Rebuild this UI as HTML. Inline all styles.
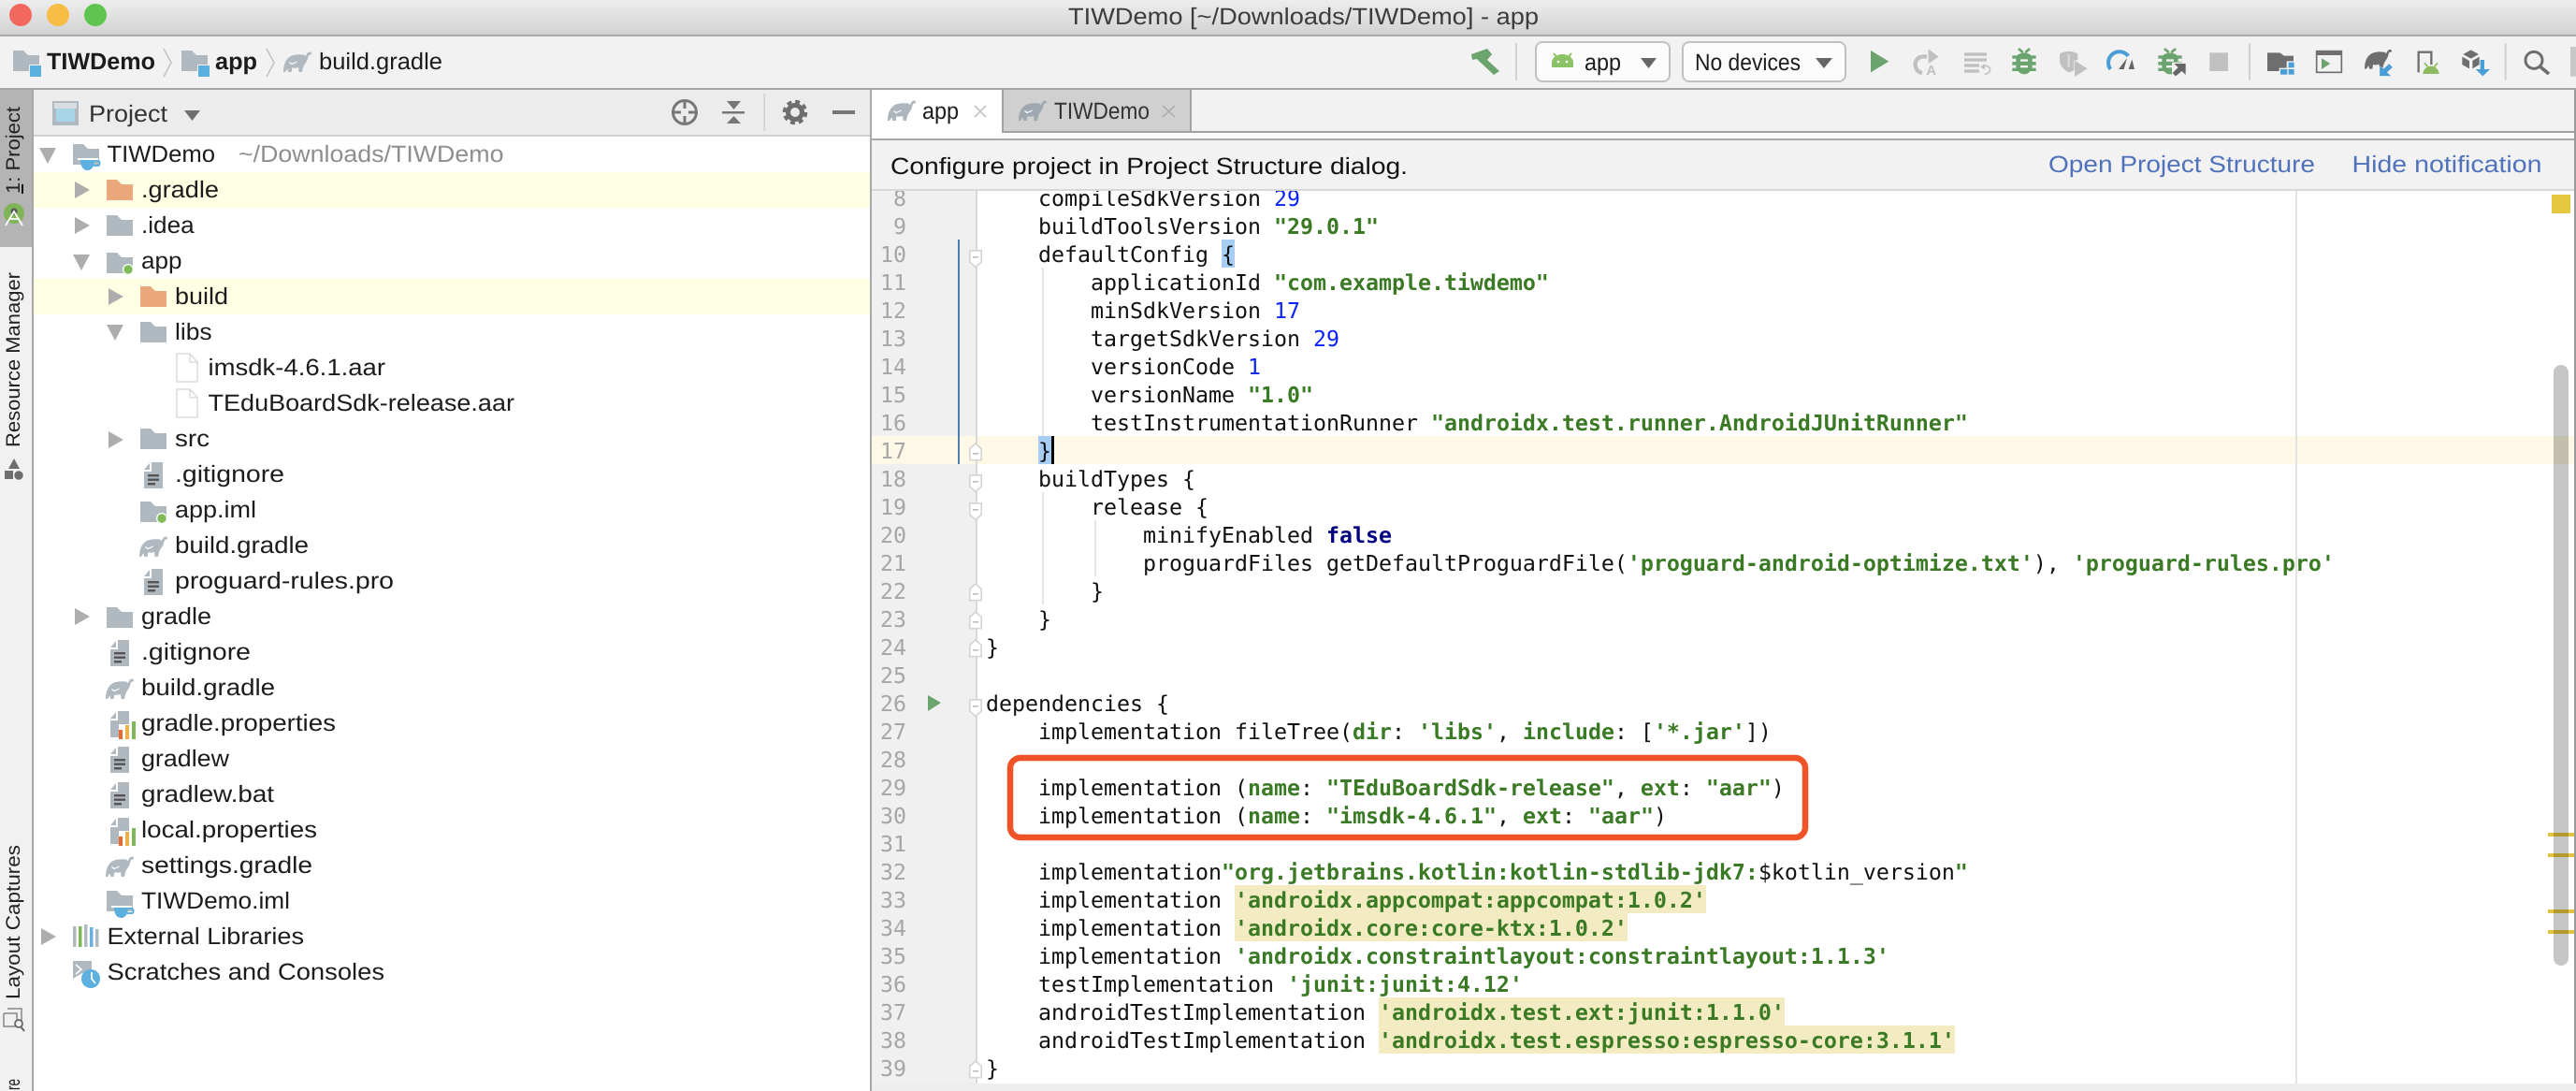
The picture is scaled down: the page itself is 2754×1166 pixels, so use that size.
<!DOCTYPE html>
<html><head><meta charset="utf-8"><title>TIWDemo</title>
<style>
html,body{margin:0;padding:0;background:#fff;width:2754px;height:1166px;overflow:hidden}
svg{display:block;text-rendering:geometricPrecision;filter:blur(.35px)}
text{white-space:pre}
.t{font-family:"Liberation Sans",sans-serif;font-size:25px;fill:#1c1c1c}
.b{font-weight:bold}
.v{font-family:"Liberation Sans",sans-serif;font-size:21px;fill:#222}
.c{font-family:"DejaVu Sans Mono","Liberation Mono",monospace;font-size:23.254px;fill:#111}
.c .s{font-weight:bold;fill:#3b7a24}
.c .n{fill:#0b24f5}
.c .k{font-weight:bold;fill:#000080}
.l{font-family:"DejaVu Sans Mono","Liberation Mono",monospace;font-size:23.254px;fill:#a6a6a6;text-anchor:end}
</style></head><body>
<svg width="2754" height="1166" viewBox="0 0 2754 1166" xmlns="http://www.w3.org/2000/svg">
<defs>
<linearGradient id="tb" x1="0" y1="0" x2="0" y2="1"><stop offset="0" stop-color="#ededed"/><stop offset="1" stop-color="#d2d2d2"/></linearGradient>
<symbol id="fold" viewBox="0 0 28 22" width="28" height="22" overflow="visible"><path d="M0 0H11L16 5H28V22H0Z"/></symbol>
<symbol id="ele" viewBox="0 0 30 23" width="30" height="23" overflow="visible"><path d="M0 22C0 13 3 7 9 4.500C13 3 18 3 22 3.500C23 4 23.500 5 24 5C24.500 3 26 .5 28.500 .5C30 .5 30.200 2.500 29.700 3.500C28.500 3 27 3.500 26.500 5.500C26 9 24 12 22.500 14C21 16.500 20.500 19 20 22H16.700L16 17C13.500 17.800 11.500 17.800 9.300 17.300L8.700 22H5.300L4.300 18.300L2 22Z"/><path d="M6.500 11.500l2.500 2l5.500-2.500" fill="none" stroke="#fff" stroke-width="1.200"/></symbol>
<symbol id="page" viewBox="0 0 20 28" width="20" height="28" overflow="visible"><path d="M8 0H20V28H0V10H8Z" fill="#b0b8c0"/><path d="M6 1V8H0Z" fill="#b0b8c0"/></symbol>
<symbol id="doc" viewBox="0 0 20 28" width="20" height="28" overflow="visible"><use href="#page"/><rect x="4" y="13" width="12" height="2.4" fill="#555"/><rect x="4" y="17.5" width="12" height="2.4" fill="#555"/><rect x="4" y="22" width="8" height="2.4" fill="#555"/></symbol>
<symbol id="prop" viewBox="0 0 28 30" width="28" height="30" overflow="visible"><use href="#page"/><rect x="9" y="14" width="18" height="16" fill="#fff"/><rect x="9" y="20" width="4" height="10" fill="#e8692d"/><rect x="16" y="15" width="4" height="15" fill="#eeb04a"/><rect x="23" y="11" width="4" height="19" fill="#7fb85a"/></symbol>
<symbol id="aar" viewBox="0 0 24 32" width="24" height="32" overflow="visible"><path d="M1 1H15L23 10V31H1Z" fill="#fff" stroke="#dcdcdc" stroke-width="1.6"/><path d="M15 1V10H23" fill="none" stroke="#dcdcdc" stroke-width="1.4"/></symbol>
<symbol id="cup" viewBox="0 0 22 12" width="22" height="12" overflow="visible"><path d="M-3-2H19V0H-3Z" fill="#fff"/><path d="M0 0H15C15 7 12 11 7.500 11C3 11 0 7 0 0Z" fill="#5cb0e0"/><path d="M15 1H19C21 1 21 6 19 6H14" fill="none" stroke="#5cb0e0" stroke-width="2"/></symbol>
<symbol id="fdown" viewBox="0 0 14 20" width="14" height="20" overflow="visible"><path d="M.8 .8H13.200V13L7 18.500L.8 13Z" fill="#fff" stroke="#d4d4d4" stroke-width="1.600"/><rect x="4" y="7" width="6" height="1.600" fill="#bdbdbd"/></symbol>
<symbol id="fup" viewBox="0 0 14 20" width="14" height="20" overflow="visible"><path d="M.8 18.700H13.200V6.500L7 1L.8 6.500Z" fill="#fff" stroke="#d4d4d4" stroke-width="1.600"/><rect x="4" y="11" width="6" height="1.600" fill="#bdbdbd"/></symbol>
<symbol id="bug" viewBox="0 0 80 90" width="80" height="90" overflow="visible"><path d="M22 2L36 14M58 2L44 14" stroke="#6ba46e" stroke-width="8" fill="none"/><path d="M14 26Q40 4 66 26V60Q58 84 40 84Q22 84 14 60Z" fill="#6ba46e"/><rect x="2" y="24" width="76" height="10" fill="#6ba46e"/><rect x="2" y="44" width="76" height="11" fill="#6ba46e"/><rect x="2" y="64" width="76" height="10" fill="#6ba46e"/><rect x="28" y="36" width="24" height="7" fill="#f2f2f2"/><rect x="28" y="56" width="24" height="7" fill="#f2f2f2"/></symbol>
</defs>

<rect width="2754" height="1166" fill="#fff"/>

<!-- EDITOR -->
<rect x="932" y="204" width="111" height="954" fill="#f0f0f0"/>
<rect x="932" y="466" width="1820" height="30" fill="#fef9e6"/>
<rect x="1043" y="204" width="2" height="954" fill="#d8d8d8"/>
<rect x="2454" y="204" width="2" height="954" fill="#e2e2e2"/>
<rect x="1024" y="256" width="2" height="240" fill="#4f7db0"/>
<rect x="1320" y="946" width="504" height="30" fill="#f3ecc3"/>
<rect x="1320" y="976" width="420" height="30" fill="#f3ecc3"/>
<rect x="1474" y="1066" width="434" height="30" fill="#f3ecc3"/>
<rect x="1474" y="1096" width="616" height="30" fill="#f3ecc3"/>
<rect x="1306" y="256" width="14" height="30" fill="#a8cdf5"/>
<rect x="1110" y="466" width="14" height="30" fill="#a8cdf5"/>
<rect x="1124" y="466" width="3" height="30" fill="#000"/>
<rect x="1114" y="286" width="2" height="180" fill="#e4e4e4"/>
<rect x="1114" y="526" width="2" height="120" fill="#e4e4e4"/>
<rect x="1170" y="556" width="2" height="60" fill="#e4e4e4"/>
<g class="l">
<text class="l" x="969" y="220">8</text><text class="l" x="969" y="250">9</text><text class="l" x="969" y="280">10</text><text class="l" x="969" y="310">11</text><text class="l" x="969" y="340">12</text><text class="l" x="969" y="370">13</text><text class="l" x="969" y="400">14</text><text class="l" x="969" y="430">15</text><text class="l" x="969" y="460">16</text><text class="l" x="969" y="490">17</text><text class="l" x="969" y="520">18</text><text class="l" x="969" y="550">19</text><text class="l" x="969" y="580">20</text><text class="l" x="969" y="610">21</text><text class="l" x="969" y="640">22</text><text class="l" x="969" y="670">23</text><text class="l" x="969" y="700">24</text><text class="l" x="969" y="730">25</text><text class="l" x="969" y="760">26</text><text class="l" x="969" y="790">27</text><text class="l" x="969" y="820">28</text><text class="l" x="969" y="850">29</text><text class="l" x="969" y="880">30</text><text class="l" x="969" y="910">31</text><text class="l" x="969" y="940">32</text><text class="l" x="969" y="970">33</text><text class="l" x="969" y="1000">34</text><text class="l" x="969" y="1030">35</text><text class="l" x="969" y="1060">36</text><text class="l" x="969" y="1090">37</text><text class="l" x="969" y="1120">38</text><text class="l" x="969" y="1150">39</text>
</g>
<use href="#fdown" x="1036" y="267"/><use href="#fup" x="1036" y="473"/><use href="#fdown" x="1036" y="507"/><use href="#fdown" x="1036" y="537"/><use href="#fup" x="1036" y="623"/><use href="#fup" x="1036" y="653"/><use href="#fup" x="1036" y="683"/><use href="#fdown" x="1036" y="747"/><use href="#fup" x="1036" y="1133"/>
<path d="M992 743L1006 751L992 760Z" fill="#6ba46e"/>
<text class="c" x="1110" y="220">compileSdkVersion <tspan class="n">29</tspan></text>
<text class="c" x="1110" y="250">buildToolsVersion <tspan class="s">"29.0.1"</tspan></text>
<text class="c" x="1110" y="280">defaultConfig {</text>
<text class="c" x="1166" y="310">applicationId <tspan class="s">"com.example.tiwdemo"</tspan></text>
<text class="c" x="1166" y="340">minSdkVersion <tspan class="n">17</tspan></text>
<text class="c" x="1166" y="370">targetSdkVersion <tspan class="n">29</tspan></text>
<text class="c" x="1166" y="400">versionCode <tspan class="n">1</tspan></text>
<text class="c" x="1166" y="430">versionName <tspan class="s">"1.0"</tspan></text>
<text class="c" x="1166" y="460">testInstrumentationRunner <tspan class="s">"androidx.test.runner.AndroidJUnitRunner"</tspan></text>
<text class="c" x="1110" y="490">}</text>
<text class="c" x="1110" y="520">buildTypes {</text>
<text class="c" x="1166" y="550">release {</text>
<text class="c" x="1222" y="580">minifyEnabled <tspan class="k">false</tspan></text>
<text class="c" x="1222" y="610">proguardFiles getDefaultProguardFile(<tspan class="s">'proguard-android-optimize.txt'</tspan>), <tspan class="s">'proguard-rules.pro'</tspan></text>
<text class="c" x="1166" y="640">}</text>
<text class="c" x="1110" y="670">}</text>
<text class="c" x="1054" y="700">}</text>
<text class="c" x="1054" y="760">dependencies {</text>
<text class="c" x="1110" y="790">implementation fileTree(<tspan class="s">dir</tspan>: <tspan class="s">'libs'</tspan>, <tspan class="s">include</tspan>: [<tspan class="s">'*.jar'</tspan>])</text>
<text class="c" x="1110" y="850">implementation (<tspan class="s">name</tspan>: <tspan class="s">"TEduBoardSdk-release"</tspan>, <tspan class="s">ext</tspan>: <tspan class="s">"aar"</tspan>)</text>
<text class="c" x="1110" y="880">implementation (<tspan class="s">name</tspan>: <tspan class="s">"imsdk-4.6.1"</tspan>, <tspan class="s">ext</tspan>: <tspan class="s">"aar"</tspan>)</text>
<text class="c" x="1110" y="940">implementation<tspan class="s">"org.jetbrains.kotlin:kotlin-stdlib-jdk7:</tspan>$kotlin_version<tspan class="s">"</tspan></text>
<text class="c" x="1110" y="970">implementation <tspan class="s">'androidx.appcompat:appcompat:1.0.2'</tspan></text>
<text class="c" x="1110" y="1000">implementation <tspan class="s">'androidx.core:core-ktx:1.0.2'</tspan></text>
<text class="c" x="1110" y="1030">implementation <tspan class="s">'androidx.constraintlayout:constraintlayout:1.1.3'</tspan></text>
<text class="c" x="1110" y="1060">testImplementation <tspan class="s">'junit:junit:4.12'</tspan></text>
<text class="c" x="1110" y="1090">androidTestImplementation <tspan class="s">'androidx.test.ext:junit:1.1.0'</tspan></text>
<text class="c" x="1110" y="1120">androidTestImplementation <tspan class="s">'androidx.test.espresso:espresso-core:3.1.1'</tspan></text>
<text class="c" x="1054" y="1150">}</text>
<rect x="1080" y="810" width="850" height="85" rx="11" fill="none" stroke="#f05327" stroke-width="6.500"/>
<rect x="2730" y="390" width="16" height="642" rx="8" fill="#c6c6c6"/>
<rect x="2730" y="466" width="16" height="30" fill="#c2bfae"/>
<rect x="2724" y="890" width="28" height="4" fill="#e2c23f"/><rect x="2724" y="912" width="28" height="4" fill="#e2c23f"/><rect x="2724" y="972" width="28" height="4" fill="#e2c23f"/><rect x="2724" y="994" width="28" height="4" fill="#e2c23f"/>
<rect x="2730" y="890" width="16" height="4" fill="#b49b2e"/><rect x="2730" y="912" width="16" height="4" fill="#b49b2e"/><rect x="2730" y="972" width="16" height="4" fill="#b49b2e"/><rect x="2730" y="994" width="16" height="4" fill="#b49b2e"/>
<rect x="2728" y="208" width="20" height="20" fill="#e6c840"/>
<rect x="932" y="1158" width="1822" height="8" fill="#eeeeee"/>

<!-- TITLE BAR -->
<rect width="2754" height="37" fill="url(#tb)"/>
<rect y="37" width="2754" height="2" fill="#ababab"/>
<circle cx="22" cy="16" r="12" fill="#f3685e"/><circle cx="62" cy="16" r="12" fill="#f7bd45"/><circle cx="102" cy="16" r="12" fill="#5dc550"/>
<text class="t" x="1142" y="26" textLength="503" lengthAdjust="spacingAndGlyphs" style="fill:#3c3c3c">TIWDemo [~/Downloads/TIWDemo] - app</text>

<!-- TOOLBAR -->
<rect y="39" width="2754" height="55" fill="#f2f2f2"/>
<rect y="94" width="2754" height="2" fill="#a6a6a6"/>
<use href="#fold" x="14" y="54" fill="#b0b8c0"/><rect x="31" y="69" width="14" height="14" fill="#f2f2f2"/><rect x="32" y="70" width="12" height="12" fill="#5cb0e0"/>
<text class="t b" x="50" y="74" textLength="116" lengthAdjust="spacingAndGlyphs">TIWDemo</text>
<path d="M175 52L183 67L175 82" fill="none" stroke="#c4c4c4" stroke-width="1.600"/>
<use href="#fold" x="194" y="54" fill="#b0b8c0"/><rect x="211" y="69" width="14" height="14" fill="#f2f2f2"/><rect x="212" y="70" width="12" height="12" fill="#5cb0e0"/>
<text class="t b" x="230" y="74" textLength="45" lengthAdjust="spacingAndGlyphs">app</text>
<path d="M285 52L293 67L285 82" fill="none" stroke="#c4c4c4" stroke-width="1.600"/>
<use href="#ele" x="303" y="55" fill="#b0b8c0"/>
<text class="t" x="341" y="74" textLength="132" lengthAdjust="spacingAndGlyphs">build.gradle</text>
<path d="M1573 58L1590 52L1595 58L1590 64L1603 76L1597 80L1582 66L1579 63L1574 64Z" fill="#6ba46e"/>
<rect x="1620" y="46" width="2" height="40" fill="#d2d2d2"/>
<rect x="1642" y="45" width="143" height="42" rx="7" fill="#fcfcfc" stroke="#c0c0c0" stroke-width="2"/>
<path d="M1659 72V67A11.500 9 0 0 1 1682 67V72Z" fill="#8cc266"/><path d="M1661 57L1665 62M1680 57L1676 62" stroke="#8cc266" stroke-width="2"/><circle cx="1666" cy="66" r="1.300" fill="#fff"/><circle cx="1675" cy="66" r="1.300" fill="#fff"/>
<text class="t" x="1694" y="75" textLength="39" lengthAdjust="spacingAndGlyphs">app</text>
<path d="M1754 62H1771L1762.500 73Z" fill="#666"/>
<rect x="1799" y="45" width="174" height="42" rx="7" fill="#fcfcfc" stroke="#c0c0c0" stroke-width="2"/>
<text class="t" x="1812" y="75" textLength="113" lengthAdjust="spacingAndGlyphs">No devices</text>
<path d="M1941 62H1959L1950 73Z" fill="#666"/>

<g transform="translate(1990 44) scale(.33333)">
<path d="M30 30L88 65L30 100Z" fill="#6ba46e"/>
<path d="M210 50C180 45 168 65 175 85C178 95 185 100 195 102" fill="none" stroke="#c0c0c0" stroke-width="13"/><path d="M215 25L248 50L215 72Z" fill="#c0c0c0"/>
<text x="208" y="108" font-family="Liberation Sans" font-weight="bold" font-size="44" fill="#c0c0c0">A</text>
<g fill="#c0c0c0"><rect x="330" y="37" width="72" height="10"/><rect x="330" y="55" width="72" height="10"/><rect x="330" y="73" width="48" height="10"/><rect x="330" y="91" width="48" height="10"/></g>
<path d="M390 80C405 76 415 85 412 95C410 102 403 106 395 105" fill="none" stroke="#c0c0c0" stroke-width="5"/><path d="M382 82L396 72V92Z" fill="#c0c0c0"/>
<use href="#bug" x="482" y="22"/>
<path d="M636 40Q665 25 694 40V60L682 62V94L665 100Q636 85 636 60Z" fill="#c0c0c0"/><rect x="662" y="42" width="6" height="42" fill="#dcdcdc"/><path d="M684 62L725 88L684 114Z" fill="#c0c0c0"/>
<path d="M799 90A35 35 0 0 1 856 48" fill="none" stroke="#4a9ed8" stroke-width="12"/><path d="M825 90L852 54L842 90Z" fill="#666"/><path d="M868 58L876 90H857Z" fill="#666"/>
<use href="#bug" x="950" y="22"/><rect x="996" y="68" width="50" height="46" fill="#f2f2f2"/><path d="M1003 72H1040V108L1028 96L1008 112L998 102L1016 84Z" fill="#666"/>
<rect x="1117" y="37" width="59" height="59" fill="#c0c0c0"/>
</g>
<g transform="translate(2400 44) scale(.33333)">
<rect x="12" y="8" width="6" height="117" fill="#d0d0d0"/>
<path d="M72 37H112L126 47H156V64H134V86H110V96H72Z" fill="#6e6e6e"/>
<g fill="#4a9ed8"><rect x="114" y="90" width="22" height="17"/><rect x="140" y="90" width="18" height="17"/><rect x="140" y="68" width="18" height="17"/></g>
<rect x="230" y="32" width="80" height="68" fill="none" stroke="#6e6e6e" stroke-width="5"/><rect x="230" y="32" width="80" height="13" fill="#6e6e6e"/><path d="M246 55L274 72L246 90Z" fill="#6ba46e"/>
<g transform="translate(384 25) scale(2.900)"><path d="M0 22C0 13 3 7 9 4.500C13 3 18 3 22 3.500C23 4 23.500 5 24 5C24.500 3 26 .5 28.500 .5C30 .5 30.200 2.500 29.700 3.500C28.500 3 27 3.500 26.500 5.500C26 9 24 12 22.500 14C21 16.500 20.500 19 20 22H16.700L16 17C13.500 17.800 11.500 17.800 9.300 17.300L8.700 22H5.300L4.300 18.300L2 22Z" fill="#6e6e6e"/></g>
<path d="M432 80L445 88L463 72L474 84L456 100L470 112H432Z" fill="#4a9ed8" stroke="#f2f2f2" stroke-width="1"/>
<path d="M557 100V35H598V75" fill="none" stroke="#6e6e6e" stroke-width="7"/>
<path d="M570 106A27 27 0 0 1 624 106Z" fill="#8dbb5f" stroke="#f2f2f2" stroke-width="2"/><path d="M576 70L586 82M618 70L608 82" stroke="#8dbb5f" stroke-width="5"/>
<path d="M725 28L750 42L725 56L700 42Z" fill="#6e6e6e"/><path d="M697 50L720 63V88L697 75Z" fill="#6e6e6e"/><path d="M730 63L752 50V75L730 88Z" fill="#6e6e6e"/>
<rect x="755" y="60" width="13" height="32" fill="#4a9ed8"/><path d="M740 90H786L763 112Z" fill="#4a9ed8"/>
<rect x="833" y="8" width="6" height="117" fill="#d0d0d0"/>
<circle cx="927" cy="61" r="27" fill="none" stroke="#6e6e6e" stroke-width="9"/><path d="M945 80L975 105" stroke="#6e6e6e" stroke-width="11"/>
<rect x="1044" y="18" width="18" height="95" fill="#c8c8c8"/>
</g>

<!-- LEFT STRIP -->
<rect y="96" width="34" height="1070" fill="#f1f1f1"/>
<rect y="96" width="34" height="168" fill="#b4b4b4"/>
<rect x="34" y="96" width="2" height="1070" fill="#a6a6a6"/>
<text class="v" transform="translate(21 207) rotate(-90)" textLength="93" lengthAdjust="spacingAndGlyphs">1: Project</text>
<rect x="23" y="197" width="2" height="10" fill="#111"/>
<circle cx="15" cy="228" r="11" fill="#7fb556"/><circle cx="15" cy="226" r="3.500" fill="#555"/><path d="M6 241L15 226L24 241M9 234H21" fill="none" stroke="#fff" stroke-width="1.800"/>
<text class="v" transform="translate(21 478) rotate(-90)" textLength="187" lengthAdjust="spacingAndGlyphs">Resource Manager</text>
<path d="M15 490L21 501H9Z" fill="#6e6e6e"/><rect x="5" y="503" width="9" height="9" fill="#6e6e6e"/><circle cx="20" cy="508" r="4.700" fill="#6e6e6e"/>
<text class="v" transform="translate(21 1068) rotate(-90)" textLength="165" lengthAdjust="spacingAndGlyphs">Layout Captures</text>
<path d="M8 1078H23V1092M4 1083H18V1097H4V1083" fill="none" stroke="#888" stroke-width="1.500"/><circle cx="20" cy="1094" r="4" fill="#f1f1f1" stroke="#666" stroke-width="1.800"/><path d="M22 1097L26 1102" stroke="#666" stroke-width="2"/>
<text class="v" transform="translate(21 1165) rotate(-90)" textLength="12" lengthAdjust="spacingAndGlyphs">re</text>

<!-- PROJECT HEADER -->
<rect x="36" y="96" width="894" height="48" fill="#ececec"/>
<rect x="36" y="144" width="894" height="2" fill="#d0d0d0"/>
<rect x="56" y="108" width="28" height="26" fill="#b0b8c0"/><rect x="58" y="110" width="24" height="6" fill="#d8dde2"/><rect x="60" y="116" width="20" height="14" fill="#a8d4e8"/>
<text class="t" x="95" y="130" textLength="84" lengthAdjust="spacingAndGlyphs" style="fill:#333">Project</text>
<path d="M197 118H214L205.500 129Z" fill="#6e6e6e"/>
<circle cx="732" cy="120" r="12.500" fill="none" stroke="#777" stroke-width="3"/><path d="M732 108V116M732 124V132M720 120H728M736 120H744" stroke="#777" stroke-width="3"/>
<path d="M777 108H792L784.500 117Z" fill="#777"/><rect x="772" y="119" width="24" height="2.500" fill="#777"/><path d="M777 132H792L784.500 124Z" fill="#777"/>
<rect x="816.500" y="100" width="1.500" height="40" fill="#d0d0d0"/>
<circle cx="850" cy="120" r="7.500" fill="none" stroke="#6e6e6e" stroke-width="5"/><circle cx="850" cy="120" r="11.500" fill="none" stroke="#6e6e6e" stroke-width="3.500" stroke-dasharray="5 4"/>
<rect x="890" y="118" width="24" height="4" fill="#777"/>

<!-- TREE -->
<rect x="36" y="184" width="894" height="38" fill="#ffffe4"/>
<rect x="36" y="298" width="894" height="38" fill="#ffffe4"/>
<g fill="#adadad">
<path d="M42 158H60L51 175Z"/><path d="M80 194L96 203L80 212Z"/><path d="M80 232L96 241L80 250Z"/><path d="M78 272H96L87 289Z"/><path d="M116 308L132 317L116 326Z"/><path d="M114 347H132L123 364Z"/><path d="M116 461L132 470L116 479Z"/><path d="M80 650L96 659L80 668Z"/><path d="M44 992L60 1001L44 1010Z"/>
</g>
<use href="#fold" x="78" y="154" fill="#b0b8c0"/><use href="#cup" x="86" y="171"/>
<use href="#fold" x="114" y="192" fill="#eba87a"/>
<use href="#fold" x="114" y="230" fill="#b0b8c0"/>
<use href="#fold" x="114" y="270" fill="#b0b8c0"/><circle cx="137" cy="288" r="6" fill="#fff"/><circle cx="137" cy="288" r="4.700" fill="#7fbb57"/>
<use href="#fold" x="150" y="306" fill="#eba87a"/>
<use href="#fold" x="150" y="344" fill="#b0b8c0"/>
<use href="#aar" x="188" y="377"/><use href="#aar" x="188" y="415"/>
<use href="#fold" x="150" y="458" fill="#b0b8c0"/>
<use href="#doc" x="154" y="494"/>
<use href="#fold" x="150" y="536" fill="#b0b8c0"/><circle cx="173" cy="554" r="6" fill="#fff"/><circle cx="173" cy="554" r="4.700" fill="#7fbb57"/>
<use href="#ele" x="149" y="573" fill="#b0b8c0"/>
<use href="#doc" x="154" y="608"/>
<use href="#fold" x="114" y="649" fill="#b0b8c0"/>
<use href="#doc" x="118" y="684"/>
<use href="#ele" x="113" y="725" fill="#b0b8c0"/>
<use href="#prop" x="118" y="760"/>
<use href="#doc" x="118" y="798"/>
<use href="#doc" x="118" y="836"/>
<use href="#prop" x="118" y="874"/>
<use href="#ele" x="113" y="915" fill="#b0b8c0"/>
<use href="#fold" x="114" y="952" fill="#b0b8c0"/><use href="#cup" x="122" y="970"/>
<g><rect x="78" y="990" width="3.500" height="22" fill="#b0b8c0"/><rect x="84" y="990" width="3.500" height="22" fill="#7fb85a"/><rect x="90" y="988" width="3.500" height="24" fill="#b0b8c0"/><rect x="96" y="991" width="3.500" height="21" fill="#6ab0dd"/><rect x="102" y="993" width="3.500" height="19" fill="#b0b8c0"/></g>
<path d="M78 1027H98V1040L88 1040L78 1046Z" fill="#b0b8c0"/><path d="M81 1031L87 1036L81 1041" stroke="#fff" fill="none" stroke-width="1.500"/><circle cx="97" cy="1046" r="10" fill="#5cb0e0"/><path d="M98 1039V1046L102 1051" stroke="#fff" fill="none" stroke-width="1.800"/>

<text class="t" x="114.500" y="173" textLength="115.500" lengthAdjust="spacingAndGlyphs">TIWDemo</text>
<text class="t" x="255" y="173" textLength="283.500" lengthAdjust="spacingAndGlyphs" style="fill:#8e8e8e">~/Downloads/TIWDemo</text>
<text class="t" x="151" y="211" textLength="83" lengthAdjust="spacingAndGlyphs">.gradle</text>
<text class="t" x="151" y="249" textLength="56.600" lengthAdjust="spacingAndGlyphs">.idea</text>
<text class="t" x="151" y="287" textLength="43.500" lengthAdjust="spacingAndGlyphs">app</text>
<text class="t" x="187" y="325" textLength="57" lengthAdjust="spacingAndGlyphs">build</text>
<text class="t" x="187" y="363" textLength="39.600" lengthAdjust="spacingAndGlyphs">libs</text>
<text class="t" x="222.500" y="401" textLength="189.500" lengthAdjust="spacingAndGlyphs">imsdk-4.6.1.aar</text>
<text class="t" x="222.500" y="439" textLength="327.500" lengthAdjust="spacingAndGlyphs">TEduBoardSdk-release.aar</text>
<text class="t" x="187" y="477" textLength="37" lengthAdjust="spacingAndGlyphs">src</text>
<text class="t" x="187" y="515" textLength="117" lengthAdjust="spacingAndGlyphs">.gitignore</text>
<text class="t" x="187" y="553" textLength="87" lengthAdjust="spacingAndGlyphs">app.iml</text>
<text class="t" x="187" y="591" textLength="143" lengthAdjust="spacingAndGlyphs">build.gradle</text>
<text class="t" x="187" y="629" textLength="234" lengthAdjust="spacingAndGlyphs">proguard-rules.pro</text>
<text class="t" x="151" y="667" textLength="75" lengthAdjust="spacingAndGlyphs">gradle</text>
<text class="t" x="151" y="705" textLength="117" lengthAdjust="spacingAndGlyphs">.gitignore</text>
<text class="t" x="151" y="743" textLength="143" lengthAdjust="spacingAndGlyphs">build.gradle</text>
<text class="t" x="151" y="781" textLength="208" lengthAdjust="spacingAndGlyphs">gradle.properties</text>
<text class="t" x="151" y="819" textLength="94" lengthAdjust="spacingAndGlyphs">gradlew</text>
<text class="t" x="151" y="857" textLength="142" lengthAdjust="spacingAndGlyphs">gradlew.bat</text>
<text class="t" x="151" y="895" textLength="188" lengthAdjust="spacingAndGlyphs">local.properties</text>
<text class="t" x="151" y="933" textLength="183" lengthAdjust="spacingAndGlyphs">settings.gradle</text>
<text class="t" x="151" y="971" textLength="159" lengthAdjust="spacingAndGlyphs">TIWDemo.iml</text>
<text class="t" x="114.500" y="1009" textLength="210.500" lengthAdjust="spacingAndGlyphs">External Libraries</text>
<text class="t" x="114.500" y="1047" textLength="296.500" lengthAdjust="spacingAndGlyphs">Scratches and Consoles</text>

<!-- TABS + NOTIFICATION -->
<rect x="932" y="96" width="1820" height="44" fill="#f2f2f2"/>
<rect x="932" y="140" width="1820" height="2" fill="#a2a2a2"/>
<rect x="932" y="142" width="1820" height="6" fill="#fafafa"/>
<rect x="932" y="96" width="139" height="52" fill="#fff"/>
<rect x="1071" y="96" width="202" height="44" fill="#d0d0d0"/>
<rect x="1071" y="96" width="2" height="46" fill="#a2a2a2"/><rect x="1272" y="96" width="2" height="46" fill="#a2a2a2"/>
<use href="#ele" x="949" y="107" fill="#adb5bd"/>
<text class="t" x="986" y="127" textLength="39" lengthAdjust="spacingAndGlyphs">app</text>
<path d="M1042 113L1054 125M1054 113L1042 125" stroke="#c6c6c6" stroke-width="1.800"/>
<use href="#ele" x="1089" y="107" fill="#9fa8b0"/>
<text class="t" x="1127" y="127" textLength="102" lengthAdjust="spacingAndGlyphs" style="fill:#333">TIWDemo</text>
<path d="M1243 113L1256 125M1256 113L1243 125" stroke="#aeaeae" stroke-width="1.800"/>
<rect x="932" y="148" width="1820" height="2" fill="#a8a8a8"/>
<rect x="932" y="150" width="1820" height="52" fill="#f2f2f2"/>
<rect x="932" y="202" width="1820" height="2" fill="#d8d8d8"/>
<text class="t" x="952" y="186" textLength="553" lengthAdjust="spacingAndGlyphs" style="fill:#111">Configure project in Project Structure dialog.</text>
<text class="t" x="2190" y="184" textLength="285" lengthAdjust="spacingAndGlyphs" style="fill:#4f72bb">Open Project Structure</text>
<text class="t" x="2514.500" y="184" textLength="203" lengthAdjust="spacingAndGlyphs" style="fill:#4f72bb">Hide notification</text>

<rect x="930" y="96" width="2" height="1070" fill="#a8a8a8"/>
<rect x="2752" y="96" width="2" height="1062" fill="#9a9a9a"/>
</svg>
</body></html>
